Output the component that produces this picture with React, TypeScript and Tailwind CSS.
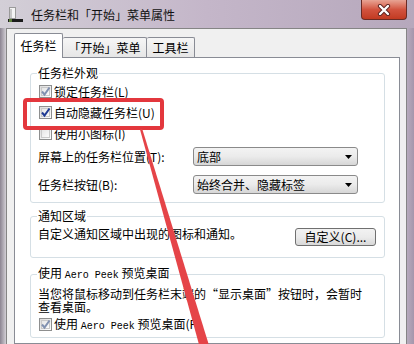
import React from 'react';

// Small Win7-style checkbox
const CheckBox = ({ checked, dim }: { checked?: boolean; dim?: boolean }) => (
    <span className="w-[13px] h-[13px] shrink-0 border border-[#8e8f8f] bg-gradient-to-br from-[#dcdcdc] to-[#ffffff] flex items-center justify-center">
        <span className="w-[9px] h-[9px] border border-[#c9c9c9] bg-gradient-to-br from-[#e6e6e6] to-[#fbfbfb] relative">
            {checked && (
                <svg width="11" height="11" viewBox="0 0 11 11" className="absolute -left-[2px] -top-[2px]">
                    <path d="M2 5.5 L4.5 8.5 L9.5 1.5" fill="none" stroke={dim ? '#8191b0' : '#1f3a93'} strokeWidth="2" />
                </svg>
            )}
        </span>
    </span>
);

const Select = ({ value }: { value: string }) => (
    <div className="w-[165px] h-[19px] border border-[#8a8a8a] rounded-[3px] bg-gradient-to-b from-[#f3f3f3] via-[#ebebeb] to-[#d6d6d6] flex items-center pl-[3px] pr-[5px]">
        <span className="flex-1 leading-[16px]">{value}</span>
        <svg width="7" height="4" viewBox="0 0 7 4">
            <path d="M0 0 H7 L3.5 4 Z" fill="#000" />
        </svg>
    </div>
);

const Mono = ({ children }: { children: React.ReactNode }) => (
    <span className="font-['Liberation_Mono',monospace] text-[10px]">{children}</span>
);

const App = () => {
    return (
        <div className="w-[414px] h-[344px] relative overflow-hidden flex flex-col text-[12px] text-black font-['Noto_Sans_CJK_SC',sans-serif] bg-gradient-to-r from-[#d3cfd7] via-[#c4b6c9] to-[#b6a8bc]">
            {/* title bar */}
            <div className="h-[28px] shrink-0 flex items-start justify-between">
                <div className="h-[28px] flex items-center pl-[8px] gap-[8px] pt-[2px]">
                    <svg width="15" height="16" viewBox="0 0 15 16">
                        <rect x="1.5" y="0.5" width="6" height="11" fill="#f4f4f4" stroke="#9a9a9a" />
                        <rect x="2" y="2" width="2" height="9" fill="#c8c8c8" />
                        <rect x="0" y="12" width="15" height="3" fill="#1b1b1b" />
                        <rect x="1" y="12" width="3" height="3" fill="#5d7f3a" />
                    </svg>
                    <span className="leading-[16px] text-[#111]">任务栏和「开始」菜单属性</span>
                </div>
                <div className="w-[46px] h-[20px] mr-[7px] rounded-b-[4px] border border-t-0 border-[#6a2b24] bg-gradient-to-b from-[#e7a394] via-[#d2533f] to-[#c23a21] flex items-center justify-center">
                    <svg width="14" height="12" viewBox="0 0 14 12">
                        <path d="M3 2 L11 10 M11 2 L3 10" stroke="#5b2320" strokeWidth="4.2" strokeLinecap="round" />
                        <path d="M3 2 L11 10 M11 2 L3 10" stroke="#ffffff" strokeWidth="2.4" strokeLinecap="round" />
                    </svg>
                </div>
            </div>

            <div className="flex flex-1 min-h-0">
                <div className="w-[6px] bg-gradient-to-r from-[#8c8592] to-[#d2cfd5]" />
                {/* dialog body */}
                <div className="w-[401px] bg-[#f0f0f0] border-l border-t border-r border-[#858585] pt-[4px] pl-[7px] pr-[6px] flex flex-col">
                    {/* tabs */}
                    <div className="h-[24px] flex items-end shrink-0">
                        <div className="w-[49px] h-[25px] -mb-px relative z-10 bg-white border border-b-0 border-[#898c95] rounded-t-[2px] flex items-center justify-center">
                            任务栏
                        </div>
                        <div className="w-[84px] h-[20px] border border-b-0 border-l-0 border-[#898c95] rounded-t-[2px] bg-gradient-to-b from-[#f6f6f6] to-[#e6e6e6] flex items-center justify-center">
                            「开始」菜单
                        </div>
                        <div className="w-[48px] h-[20px] border border-b-0 border-l-0 border-[#898c95] rounded-t-[2px] bg-gradient-to-b from-[#f6f6f6] to-[#e6e6e6] flex items-center justify-center">
                            工具栏
                        </div>
                    </div>

                    {/* tab panel */}
                    <div className="flex-1 bg-white border border-[#898c95] pt-[7px] pl-[15px] pr-[14px] flex flex-col">
                        <fieldset className="border border-[#d5dfe5] rounded-[3px] pl-[8px] pr-[8px] pb-[7px]">
                            <legend className="ml-[-2px] px-[1px] leading-[16px]">任务栏外观</legend>
                            <div className="h-[21px] flex items-center gap-[2px]">
                                <CheckBox checked dim />
                                <span>锁定任务栏(L)</span>
                            </div>
                            <div className="h-[21px] flex items-center gap-[2px]">
                                <CheckBox checked />
                                <span>自动隐藏任务栏(U)</span>
                            </div>
                            <div className="h-[21px] flex items-center gap-[2px]">
                                <CheckBox />
                                <span>使用小图标(I)</span>
                            </div>
                            <div className="h-[21px] mt-[2px] flex items-center">
                                <span className="w-[155px] -ml-px">屏幕上的任务栏位置(T):</span>
                                <Select value="底部" />
                            </div>
                            <div className="h-[21px] mt-[7px] flex items-center">
                                <span className="w-[155px] -ml-px">任务栏按钮(B):</span>
                                <Select value="始终合并、隐藏标签" />
                            </div>
                        </fieldset>

                        <fieldset className="mt-[5px] border border-[#d5dfe5] rounded-[3px] pl-[8px] pr-[8px] pb-[11px]">
                            <legend className="ml-[-2px] px-[1px] leading-[16px]">通知区域</legend>
                            <div className="flex items-start">
                                <span className="mt-[2px] -ml-px leading-[16px]">自定义通知区域中出现的图标和通知。</span>
                                <div className="ml-auto mt-[4px] w-[81px] h-[18px] border border-[#707070] rounded-[3px] bg-gradient-to-b from-[#f2f2f2] via-[#ebebeb] to-[#d8d8d8] flex items-center justify-center leading-[16px]">
                                    自定义(C)...
                                </div>
                            </div>
                        </fieldset>

                        <fieldset className="mt-[7px] border border-[#d5dfe5] rounded-[3px] pl-[8px] pr-[8px] pb-[5px]">
                            <legend className="ml-[-2px] px-[1px] leading-[16px]">
                                使用 <Mono>Aero Peek</Mono> 预览桌面
                            </legend>
                            <p className="w-[330px] mt-[3px] -ml-px leading-[13px]">
                                当您将鼠标移动到任务栏末端的“显示桌面”按钮时，会暂时查看桌面。
                            </p>
                            <div className="mt-[3px] h-[16px] flex items-center gap-[2px]">
                                <CheckBox checked dim />
                                <span>
                                    使用 <Mono>Aero Peek</Mono> 预览桌面(P)
                                </span>
                            </div>
                        </fieldset>
                    </div>
                </div>
                <div className="flex-1 bg-gradient-to-r from-[#b7abbd] to-[#a596ab]" />
            </div>

            {/* annotation: red highlight box and arrow */}
            <div className="absolute left-[23px] top-[98px] w-[141px] h-[32px] border-[4px] border-[#e3373d] rounded-[4px] pointer-events-none" />
            <svg className="absolute left-0 top-0 pointer-events-none" width="414" height="344" viewBox="0 0 414 344">
                <polygon points="140,129.5 142.2,128.8 208.6,344 199.4,346" fill="#e54448" />
            </svg>
        </div>
    );
};

export default App;
